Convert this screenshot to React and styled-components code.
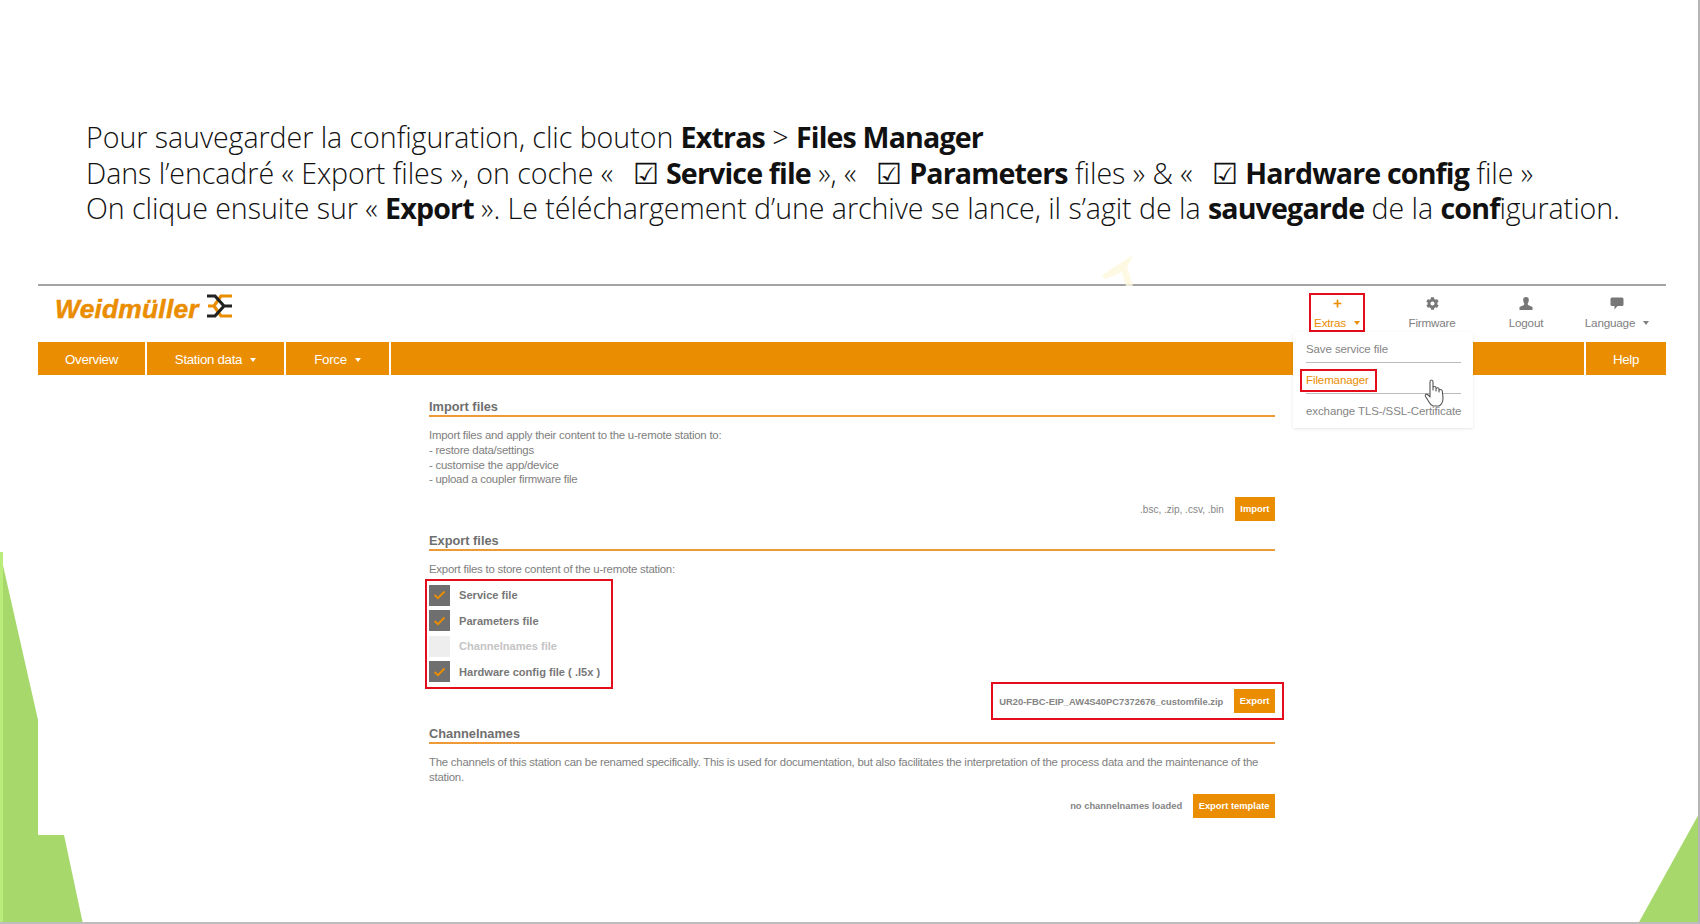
import React from "react";
import styled, { createGlobalStyle } from "styled-components";
import { FaCog, FaPlus } from "react-icons/fa";

const Global = createGlobalStyle`
  html, body { margin: 0; padding: 0; background: #fff; }
  body { font-family: "Liberation Sans", Arial, sans-serif; overflow: hidden; }
`;

const ORANGE = "#ea8d00";
const RED = "#e30d1c";

const Slide = styled.div`
  position: relative;
  width: 1700px;
  height: 924px;
  overflow: hidden;
  background: #fff;
  box-sizing: border-box;
  padding-top: 119px;
  border-right: 2px solid #b5b5b5;
  border-bottom: 2px solid #bdbdbd;
`;
const Decor = styled.svg`
  position: absolute;
  left: 0;
  top: 0;
  pointer-events: none;
`;
const Intro = styled.div`
  position: relative;
  padding-left: 86px;
  font-family: "Open Sans", sans-serif;
  font-weight: 300;
  font-size: 28.6px;
  line-height: 35.7px;
  letter-spacing: -0.05px;
  color: #111;
  white-space: pre;
  height: 165px;
`;
const B = styled.b`
  font-weight: 700;
  letter-spacing: -0.85px;
`;
const Shot = styled.div`
  position: relative;
  width: 1628px;
  margin-left: 38px;
  border-top: 2px solid #a3a3a3;
  background: #fff;
  height: 549px;
  color: #777;
`;
const Header = styled.div`
  display: flex;
  justify-content: space-between;
  height: 56px;
`;
const Logo = styled.div`
  display: flex;
  align-items: flex-start;
  gap: 6px;
  padding: 6px 0 0 17px;
`;
const LogoText = styled.span`
  font: italic 700 26.4px/30px "Liberation Sans", sans-serif;
  color: ${ORANGE};
  margin-top: 2px;
  letter-spacing: 0.2px;
  -webkit-text-stroke: 0.5px ${ORANGE};
`;
const LogoMark = styled.svg`
  margin-top: 2px;
`;
const Tools = styled.div`
  display: flex;
  align-items: flex-start;
  padding-right: 4px;
`;
const Tool = styled.div`
  box-sizing: border-box;
  width: ${(p) => p.$w}px;
  margin-left: ${(p) => p.$ml || 0}px;
  height: 38.5px;
  margin-top: 7px;
  display: flex;
  flex-direction: column;
  align-items: center;
  justify-content: flex-end;
  gap: 5px;
  padding-bottom: 1px;
  font-size: 11.7px;
  letter-spacing: -0.2px;
  line-height: 13px;
  color: ${(p) => (p.$active ? ORANGE : "#808080")};
  border: ${(p) => (p.$active ? `2px solid ${RED}` : "2px solid transparent")};
`;
const IconSlot = styled.div`
  height: 14px;
  display: flex;
  align-items: center;
  justify-content: center;
  svg { display: block; }
`;
const Caret = styled.i`
  display: inline-block;
  width: 0;
  height: 0;
  margin-left: 8px;
  vertical-align: middle;
  border-top: 4px solid ${(p) => p.$c || "currentColor"};
  border-left: 3.5px solid transparent;
  border-right: 3.5px solid transparent;
`;
const Nav = styled.div`
  display: flex;
  gap: 2px;
  height: 33px;
`;
const NavItem = styled.div`
  width: ${(p) => p.$w}px;
  flex: ${(p) => (p.$grow ? "1" : "none")};
  background: ${ORANGE};
  color: #fff;
  font-size: 13.3px;
  line-height: 35px;
  text-align: center;
  letter-spacing: -0.3px;
`;
const Dropdown = styled.div`
  position: absolute;
  left: 1255px;
  top: 46px;
  width: 180px;
  height: 96px;
  box-sizing: border-box;
  background: #fff;
  padding: 8px 12px 0 13px;
  box-shadow: 0 1px 3px rgba(0, 0, 0, 0.1);
  font-size: 11.5px;
  color: #858585;
`;
const DropItem = styled.div`
  height: 22px;
  line-height: 18px;
  border-bottom: ${(p) => (p.$last ? "none" : "1px solid #bbb")};
  margin-bottom: 8px;
  white-space: nowrap;
  position: relative;
  letter-spacing: -0.1px;
`;
const Picked = styled.span`
  display: inline-block;
  color: ${ORANGE};
  border: 2px solid ${RED};
  margin: -2px 0 0 -6px;
  padding: 1px 6px 1px 4px;
  line-height: 17px;
`;
const Hand = styled.svg`
  position: absolute;
  left: 1386px;
  top: 93px;
`;
const Mark = styled.svg`
  position: absolute;
  left: 1062px;
  top: -36px;
  opacity: 0.8;
`;
const Content = styled.div`
  width: 846px;
  margin-left: 391px;
  padding-top: 23px;
  display: flex;
  flex-direction: column;
`;
const Heading = styled.div`
  font-size: 12.8px;
  font-weight: 700;
  line-height: 17px;
  height: 17px;
  color: #6f6f6f;
  border-bottom: 2px solid #ee9a36;
  margin-top: ${(p) => p.$mt || 0}px;
`;
const Para = styled.div`
  font-size: 11.4px;
  line-height: 14.8px;
  margin-top: ${(p) => p.$mt}px;
  color: #7e7e7e;
  letter-spacing: -0.23px;
`;
const Action = styled.div`
  display: flex;
  justify-content: flex-end;
  align-items: center;
  gap: 11px;
  margin-top: ${(p) => p.$mt}px;
  font-size: ${(p) => (p.$bold ? 9.4 : 10)}px;
  font-weight: ${(p) => (p.$bold ? 700 : 400)};
  color: #858585;
  white-space: nowrap;
`;
const ExportBox = styled(Action)`
  align-self: flex-end;
  border: 2px solid ${RED};
  margin-right: -9px;
  height: 38px;
  box-sizing: border-box;
  padding: 0 7px 0 9px;
  width: 293px;
  font-size: 9.4px;
  font-weight: 700;
`;
const Btn = styled.div`
  background: ${ORANGE};
  color: #fff;
  font-size: 9.4px;
  font-weight: 700;
  line-height: 24px;
  height: 24px;
  padding: 0 5.5px;
  box-sizing: border-box;
  text-align: center;
`;
const Checks = styled.div`
  box-sizing: border-box;
  width: 188px;
  height: 110px;
  margin: 2.5px 0 0 -4px;
  padding: 3.5px 0 0 2px;
  border: 2px solid ${RED};
  display: flex;
  flex-direction: column;
  gap: 4.4px;
`;
const CheckRow = styled.div`
  display: flex;
  align-items: center;
  gap: 9px;
  height: 21px;
  font-size: 11.1px;
  font-weight: 700;
  color: ${(p) => (p.$off ? "#c4c4c4" : "#777")};
`;
const Box = styled.div`
  width: 21px;
  height: 21px;
  background: ${(p) => (p.$off ? "#eeeeee" : "#6f6f6f")};
  display: flex;
  align-items: center;
  justify-content: center;
`;

const Tick = () => (
  <svg width="13" height="10" viewBox="0 0 13 10">
    <path d="M1.5 5 L5 8.2 L11.5 1.5" fill="none" stroke={ORANGE} strokeWidth="2" />
  </svg>
);

const Check = ({ off, children }) => (
  <CheckRow $off={off}>
    <Box $off={off}>{!off && <Tick />}</Box>
    {children}
  </CheckRow>
);

export default function App() {
  return (
    <>
      <Global />
      <Slide>
        <Decor width="1700" height="924" viewBox="0 0 1700 924">
          <polygon points="0,552 38,720 38,835 64,835 83,924 0,924" fill="#a6d86c" />
          <rect x="0" y="552" width="3" height="372" fill="#b9ec78" />
          <polygon points="1700,812 1638,924 1700,924" fill="#a6d86c" />
        </Decor>
        <Intro>
          {"Pour sauvegarder la configuration, clic bouton "}<B>Extras</B>{" > "}<B>Files Manager</B>{"\n"}
          {"Dans l’encadré « Export files », on coche «  \u2009☑ "}<B>Service file</B>{" », «  \u2009☑ "}<B>Parameters</B>{" files » & «  \u2009☑ "}<B>Hardware config</B>{" file »\n"}
          {"On clique ensuite sur « "}<B>Export</B>{" ». Le téléchargement d’une archive se lance, il s’agit de la "}<B>sauvegarde</B>{" de la "}<B>conf</B>{"iguration."}
        </Intro>
        <Shot>
          <Mark width="40" height="36" viewBox="0 0 40 36">
            <path d="M2 25 L33 5 L27 18 L33 36 L26 36 L22 22 L5 29 Z" fill="#fdf8dc" />
          </Mark>
          <Header>
            <Logo>
              <LogoText>Weidmüller</LogoText>
              <LogoMark width="28" height="24" viewBox="0 0 28 24">
                <path d="M27 2 H16 L9 12 H3 M27 22 H16 L9 12" fill="none" stroke={ORANGE} strokeWidth="3.2" />
                <path d="M2 2 H10 L19 12 H27 M2 22 H10 L19 12" fill="none" stroke="#222" strokeWidth="3.2" />
              </LogoMark>
            </Logo>
            <Tools>
              <Tool $w={56} $active>
                <IconSlot><FaPlus size={9} /></IconSlot>
                <span>Extras<Caret /></span>
              </Tool>
              <Tool $w={90} $ml={22}>
                <IconSlot><FaCog size={13} color="#777" /></IconSlot>
                <span>Firmware</span>
              </Tool>
              <Tool $w={90} $ml={4}>
                <IconSlot>
                  <svg width="14" height="13" viewBox="0 0 14 13">
                    <path d="M7 0 C9.2 0 10 1.6 9.8 3.4 C9.6 5 9 6 8.6 6.6 L9 8 L13.5 10 V13 H0.5 V10 L5 8 L5.4 6.6 C5 6 4.4 5 4.2 3.4 C4 1.6 4.8 0 7 0 Z" fill="#777" />
                  </svg>
                </IconSlot>
                <span>Logout</span>
              </Tool>
              <Tool $w={90} $ml={1}>
                <IconSlot>
                  <svg width="14" height="13" viewBox="0 0 14 13">
                    <path d="M2 0.5 H12 Q13.5 0.5 13.5 2 V7.5 Q13.5 9 12 9 H7.5 L4.5 12.5 V9 H2 Q0.5 9 0.5 7.5 V2 Q0.5 0.5 2 0.5 Z" fill="#777" />
                  </svg>
                </IconSlot>
                <span>Language<Caret /></span>
              </Tool>
            </Tools>
          </Header>
          <Nav>
            <NavItem $w={107}>Overview</NavItem>
            <NavItem $w={137}>Station data<Caret $c="#fff" /></NavItem>
            <NavItem $w={103}>Force<Caret $c="#fff" /></NavItem>
            <NavItem $grow />
            <NavItem $w={80}>Help</NavItem>
          </Nav>
          <Dropdown>
            <DropItem>Save service file</DropItem>
            <DropItem><Picked>Filemanager</Picked></DropItem>
            <DropItem $last>exchange TLS-/SSL-Certificate</DropItem>
          </Dropdown>
          <Hand width="22" height="28" viewBox="0 0 22 28">
            <path d="M6 15 V3 Q6 1 7.5 1 Q9 1 9 3 V11 V9 Q9 7.5 10.5 7.5 Q12 7.5 12 9 V12 V10 Q12 8.8 13.5 8.8 Q15 8.8 15 10 V13 V11.5 Q15 10.5 16.5 10.5 Q18 10.5 18.3 12 L19 19 Q19 25 15 27 H9 Q6.5 26 5 23 L1.5 17.5 Q0.8 16 2 15.2 Q3.5 14.5 6 18 Z" fill="#fff" stroke="#555" strokeWidth="1.1" strokeLinejoin="round" />
          </Hand>
          <Content>
            <Heading>Import files</Heading>
            <Para $mt={11}>
              Import files and apply their content to the u-remote station to:<br />
              - restore data/settings<br />
              - customise the app/device<br />
              - upload a coupler firmware file
            </Para>
            <Action $mt={10}>
              <span>.bsc, .zip, .csv, .bin</span>
              <Btn>Import</Btn>
            </Action>
            <Heading $mt={11}>Export files</Heading>
            <Para $mt={11}>Export files to store content of the u-remote station:</Para>
            <Checks>
              <Check>Service file</Check>
              <Check>Parameters file</Check>
              <Check off>Channelnames file</Check>
              <Check>Hardware config file ( .l5x )</Check>
            </Checks>
            <ExportBox $mt={-7}>
              <span>UR20-FBC-EIP_AW4S40PC7372676_customfile.zip</span>
              <Btn>Export</Btn>
            </ExportBox>
            <Heading $mt={5}>Channelnames</Heading>
            <Para $mt={11}>
              The channels of this station can be renamed specifically. This is used for documentation, but also facilitates the interpretation of the process data and the maintenance of the station.
            </Para>
            <Action $mt={8.5} $bold>
              <span>no channelnames loaded</span>
              <Btn>Export template</Btn>
            </Action>
          </Content>
        </Shot>
      </Slide>
    </>
  );
}
